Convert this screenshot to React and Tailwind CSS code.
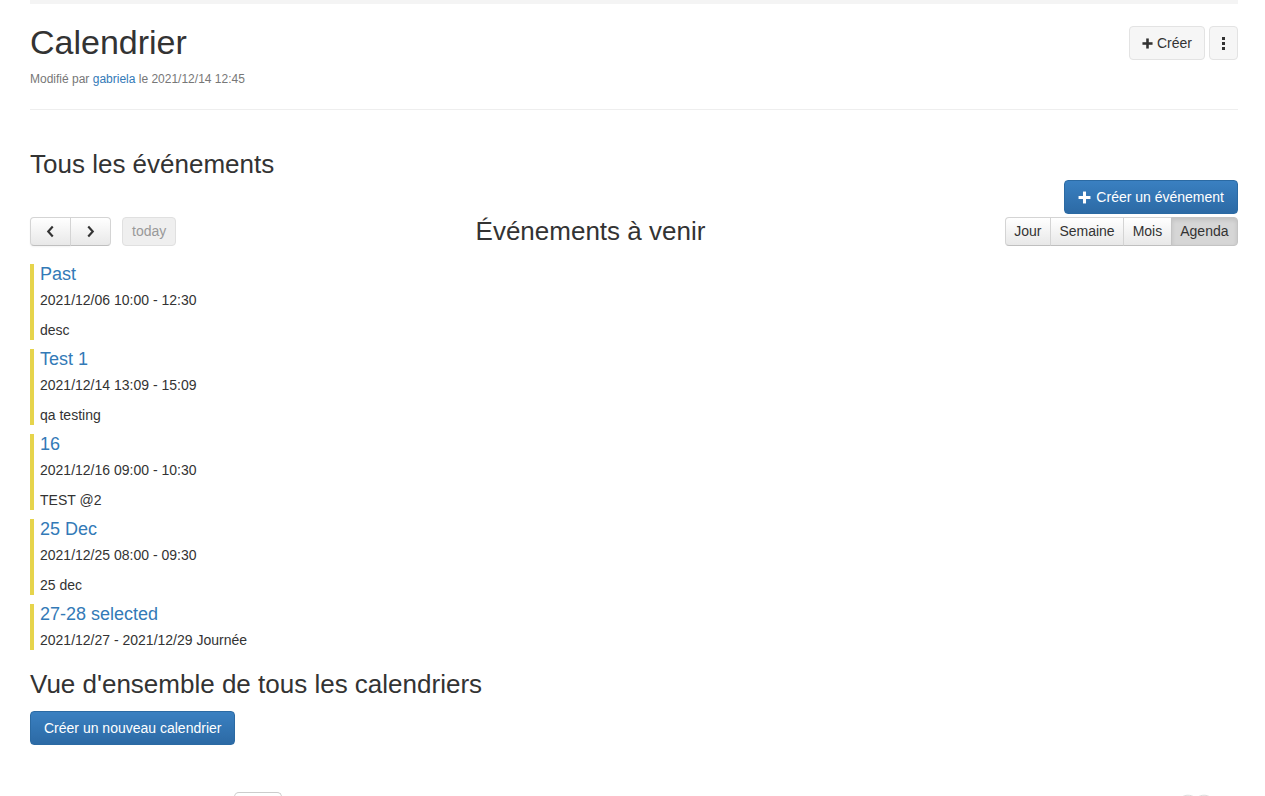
import React from "react";

const events = [
  { title: "Past", when: "2021/12/06 10:00 - 12:30", desc: "desc" },
  { title: "Test 1", when: "2021/12/14 13:09 - 15:09", desc: "qa testing" },
  { title: "16", when: "2021/12/16 09:00 - 10:30", desc: "TEST @2" },
  { title: "25 Dec", when: "2021/12/25 08:00 - 09:30", desc: "25 dec" },
  { title: "27-28 selected", when: "2021/12/27 - 2021/12/29 Journée" },
];

function PlusIcon({ className }) {
  return (
    <svg viewBox="0 0 12 12" className={className} fill="currentColor">
      <rect x="4.6" y="0.5" width="2.8" height="11" />
      <rect x="0.5" y="4.6" width="11" height="2.8" />
    </svg>
  );
}

function Chevron({ dir }) {
  return (
    <svg viewBox="0 0 10 14" className="w-[9px] h-[13px]" fill="none" stroke="#333" strokeWidth="2.4">
      {dir === "left" ? <path d="M7.5 1.5 L2.5 7 L7.5 12.5" /> : <path d="M2.5 1.5 L7.5 7 L2.5 12.5" />}
    </svg>
  );
}

function EventItem({ ev }) {
  return (
    <div className="border-l-4 border-[#e6d44c] pl-[6px]">
      <div className="text-[18px] leading-[20px] text-[#337ab7]">{ev.title}</div>
      <div className="mt-[6px] text-[14px] leading-[20px]">{ev.when}</div>
      {ev.desc && <div className="mt-[10px] text-[14px] leading-[20px]">{ev.desc}</div>}
    </div>
  );
}

export default function App() {
  const views = ["Jour", "Semaine", "Mois", "Agenda"];
  return (
    <div className="min-h-screen bg-white text-[#333] font-['Liberation_Sans',Arial,sans-serif] text-[14px]">
      <div className="mx-[30px] w-[1208px]">
        {/* top strip */}
        <div className="h-[4px] bg-[#f4f4f4]" />

        {/* header */}
        <div className="flex justify-between items-start">
          <div>
            <h1 className="mt-[20px] text-[34px] leading-[37px]">Calendrier</h1>
            <div className="mt-[10px] text-[12px] leading-[17px] text-[#777]">
              Modifié par <span className="text-[#337ab7]">gabriela</span> le 2021/12/14 12:45
            </div>
          </div>
          <div className="mt-[22px] flex gap-[4px]">
            <button className="h-[34px] px-[12px] flex items-center gap-[4px] rounded-[4px] border border-[#e3e3e3] bg-[#f6f6f6] text-[14px] text-[#333]">
              <PlusIcon className="w-[11px] h-[11px]" />
              Créer
            </button>
            <button className="h-[34px] w-[29px] flex flex-col items-center justify-center gap-[2px] rounded-[4px] border border-[#e3e3e3] bg-[#f6f6f6]">
              <span className="w-[3px] h-[3px] bg-[#333]" />
              <span className="w-[3px] h-[3px] bg-[#333]" />
              <span className="w-[3px] h-[3px] bg-[#333]" />
            </button>
          </div>
        </div>
        <div className="mt-[21px] h-px bg-[#eee]" />

        {/* all events */}
        <h2 className="mt-[40px] text-[26px] leading-[29px]">Tous les événements</h2>
        <div className="flex justify-end mt-[1px]">
          <button className="h-[34px] px-[13px] flex items-center gap-[5px] rounded-[4px] border border-[#2b6aa3] bg-linear-to-b from-[#3a80c1] to-[#2c6aa5] text-white text-[14px]">
            <PlusIcon className="w-[13px] h-[13px]" />
            Créer un événement
          </button>
        </div>

        {/* toolbar */}
        <div className="mt-[3px] flex items-center h-[29px]">
          <div className="flex items-center">
            <div className="flex">
              <button className="h-[29px] w-[41px] flex items-center justify-center rounded-l-[4px] border border-[#d4d4d4] border-b-[#bfbfbf] bg-linear-to-b from-white to-[#e8e8e8] shadow-[0_1px_2px_rgba(0,0,0,0.05)]">
                <Chevron dir="left" />
              </button>
              <button className="-ml-px h-[29px] w-[41px] flex items-center justify-center rounded-r-[4px] border border-[#d4d4d4] border-b-[#bfbfbf] bg-linear-to-b from-white to-[#e8e8e8]">
                <Chevron dir="right" />
              </button>
            </div>
            <button className="ml-[11px] h-[29px] px-[9px] rounded-[4px] border border-[#e0e0e0] bg-[#efefef] text-[14px] text-[#999]">
              today
            </button>
          </div>
          <div className="flex-1 text-center text-[26px] leading-[29px]">Événements à venir</div>
          <div className="flex">
            {views.map((v, i) => (
              <button
                key={v}
                className={
                  "h-[29px] px-[8.5px] border text-[14px] text-[#333] " +
                  (i > 0 ? "-ml-px " : "") +
                  (i === 0 ? "rounded-l-[4px] " : "") +
                  (i === views.length - 1
                    ? "rounded-r-[4px] border-[#c4c4c4] bg-[#d6d6d6] shadow-[inset_0_2px_4px_rgba(0,0,0,0.1)]"
                    : "border-[#d4d4d4] border-b-[#bfbfbf] bg-linear-to-b from-white to-[#e8e8e8]")
                }
              >
                {v}
              </button>
            ))}
          </div>
        </div>

        {/* list */}
        <div className="mt-[18px] flex flex-col gap-[9px]">
          {events.map((ev) => (
            <EventItem key={ev.title} ev={ev} />
          ))}
        </div>

        {/* overview */}
        <h2 className="mt-[20px] text-[26px] leading-[29px]">Vue d'ensemble de tous les calendriers</h2>
        <button className="mt-[12px] h-[34px] px-[13px] rounded-[4px] border border-[#2b6aa3] bg-linear-to-b from-[#3a80c1] to-[#2c6aa5] text-white text-[14px]">
          Créer un nouveau calendrier
        </button>

        {/* footer peeking in */}
        <div className="mt-[47px] flex justify-between">
          <div className="ml-[204px] h-[20px] w-[48px] rounded-t-[5px] border border-[#ccc] border-b-0" />
          <svg viewBox="0 0 40 10" className="mr-[22px] mt-[2px] w-[40px] h-[10px]" fill="none" stroke="#ddd">
            <path d="M2 6 C8 0 14 0 20 4 C26 0 32 0 38 6" />
          </svg>
        </div>
      </div>
    </div>
  );
}
